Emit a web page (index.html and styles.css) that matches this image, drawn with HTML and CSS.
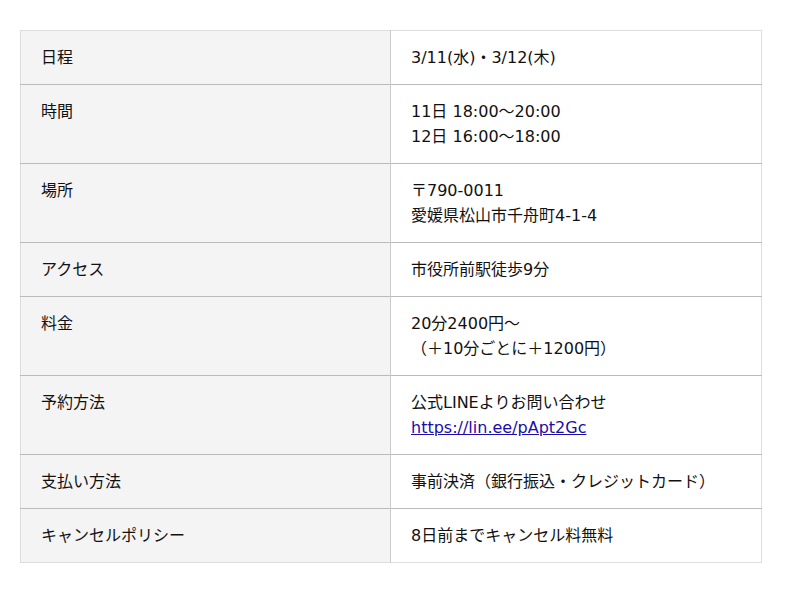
FILE: index.html
```html
<!DOCTYPE html>
<html lang="ja">
<head>
<meta charset="utf-8">
<link rel="stylesheet" href="styles.css">
</head>
<body>
<table class="info">
  <tr><th>日程</th><td>3/11(水)・3/12(木)</td></tr>
  <tr><th>時間</th><td>11日 18:00〜20:00<br>12日 16:00〜18:00</td></tr>
  <tr><th>場所</th><td>〒790-0011<br>愛媛県松山市千舟町4-1-4</td></tr>
  <tr><th>アクセス</th><td>市役所前駅徒歩9分</td></tr>
  <tr><th>料金</th><td>20分2400円〜<br>（＋10分ごとに＋1200円）</td></tr>
  <tr><th>予約方法</th><td>公式LINEよりお問い合わせ<br><a href="#">https://lin.ee/pApt2Gc</a></td></tr>
  <tr><th>支払い方法</th><td>事前決済（銀行振込・クレジットカード）</td></tr>
  <tr><th>キャンセルポリシー</th><td>8日前までキャンセル料無料</td></tr>
</table>
</body>
</html>
```
FILE: styles.css
```css
html, body { margin: 0; padding: 0; background: #fff; }
body { padding: 30px 38px 0 20px; font-family: "DejaVu Sans", "Noto Sans CJK JP", sans-serif; font-size: 16px; line-height: 25px; color: #111; }
.info { border-collapse: collapse; width: 742px; table-layout: fixed; border: 1px solid #ddd; }
.info th, .info td { text-align: left; vertical-align: top; font-weight: normal; padding: 14px 20px 14px 20px; border-top: 1px solid #bbb; }
.info tr:first-child th, .info tr:first-child td { border-top: 1px solid #ddd; }
.info th { width: 329px; background: #f4f4f4; border-right: 1px solid #ccc; }
.info a { color: #1a0dab; text-decoration: underline; }
```
